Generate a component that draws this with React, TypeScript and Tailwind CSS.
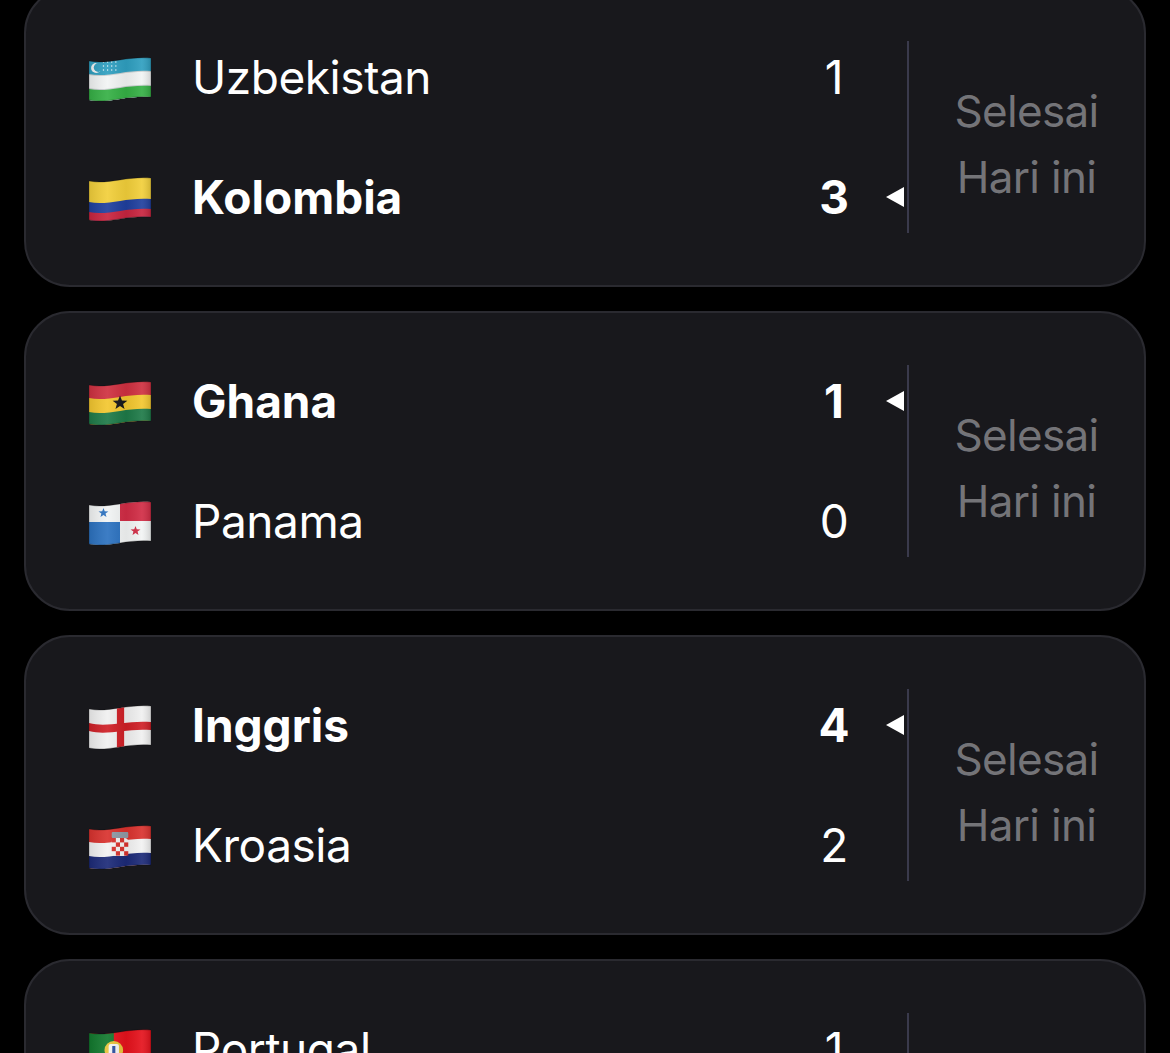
import { ReactNode, useId } from 'react';

// wavy edge shared by every flag, painted top to bottom and clipped to the outline
const wave = (y: number) => `M0 ${y + 3}C18 ${y + 7} 36 ${y - 2} 60 ${y}`;
const band = (y: number) => `${wave(y)}V54H0Z`;
const outline = `${wave(2)}V41C36 39 18 48 0 44Z`;

const star = (cx: number, cy: number, r: number) => {
  const pts: string[] = [];
  for (let i = 0; i < 10; i++) {
    const a = (Math.PI / 5) * i - Math.PI / 2;
    const d = i % 2 === 0 ? r : r * 0.42;
    pts.push(`${(cx + Math.cos(a) * d).toFixed(1)},${(cy + Math.sin(a) * d).toFixed(1)}`);
  }
  return pts.join(' ');
};

function Flag({ children }: { children: ReactNode }) {
  const id = useId();
  return (
    <svg width="62" height="50" viewBox="0 0 60 50" preserveAspectRatio="none" className="shrink-0">
      <defs>
        <clipPath id={`${id}c`}>
          <path d={outline} />
        </clipPath>
        <linearGradient id={`${id}g`} x1="0" x2="1" y1="0" y2="0">
          <stop offset="0" stopColor="#000" stopOpacity="0.1" />
          <stop offset="0.3" stopColor="#fff" stopOpacity="0.08" />
          <stop offset="0.6" stopColor="#000" stopOpacity="0.06" />
          <stop offset="0.85" stopColor="#fff" stopOpacity="0.08" />
          <stop offset="1" stopColor="#000" stopOpacity="0.14" />
        </linearGradient>
      </defs>
      <g transform="translate(0 4)">
        <g clipPath={`url(#${id}c)`}>
          {children}
          <rect x="0" y="0" width="60" height="50" fill={`url(#${id}g)`} />
        </g>
        <path d={outline} fill="none" stroke="#000" strokeOpacity="0.3" strokeWidth="0.8" />
      </g>
    </svg>
  );
}

const Uzbekistan = () => (
  <Flag>
    <path d={band(0)} fill="#2f9fc0" />
    <path d={band(15)} fill="#c9cfd0" />
    <path d={band(16)} fill="#f2f4f4" />
    <path d={band(29)} fill="#c9cfd0" />
    <path d={band(30)} fill="#35b045" />
    <circle cx="7" cy="12" r="5" fill="#f2f4f4" />
    <circle cx="9" cy="11.5" r="4.4" fill="#2f9fc0" />
    {[14, 18, 22, 26].map((x) =>
      [6, 10, 14].map((y) => <circle key={`${x}-${y}`} cx={x} cy={y} r="0.7" fill="#e8f4f8" />),
    )}
  </Flag>
);

const Kolombia = () => (
  <Flag>
    <path d={band(0)} fill="#f2cf3a" />
    <path d={band(23)} fill="#1f3f9e" />
    <path d={band(33)} fill="#c8243f" />
  </Flag>
);

const Ghana = () => (
  <Flag>
    <path d={band(0)} fill="#cf3040" />
    <path d={band(15)} fill="#f3c72f" />
    <path d={band(29)} fill="#1e7a48" />
    <polygon points={star(30, 23, 7.5)} fill="#16161a" />
  </Flag>
);

const Panama = () => (
  <Flag>
    <rect x="0" y="0" width="60" height="50" fill="#f2f4f4" />
    <rect x="30" y="0" width="30" height="21" fill="#d12c45" />
    <rect x="0" y="22" width="30" height="28" fill="#2c72c0" />
    <polygon points={star(14, 13, 5)} fill="#2c72c0" />
    <polygon points={star(45, 31, 5)} fill="#d12c45" />
  </Flag>
);

const Inggris = () => (
  <Flag>
    <rect x="0" y="0" width="60" height="50" fill="#f0f0f0" />
    <rect x="27" y="0" width="7" height="50" fill="#cf1f26" />
    <path d="M0 19C18 24 36 16 60 18V26C36 24 18 32 0 27Z" fill="#cf1f26" />
  </Flag>
);

const Kroasia = () => (
  <Flag>
    <path d={band(0)} fill="#d9322e" />
    <path d={band(15)} fill="#f2f2f2" />
    <path d={band(29)} fill="#1c2a78" />
    <rect x="22" y="8" width="16" height="6" rx="1" fill="#8f9aa6" />
    <rect x="22" y="14" width="16" height="18" rx="4" fill="#f4f4f4" />
    {[0, 1, 2, 3].map((r) =>
      [0, 1, 2, 3].map((c) =>
        (r + c) % 2 === 0 ? (
          <rect key={`${r}-${c}`} x={22 + c * 4} y={14 + r * 4.4} width="4" height="4.4" fill="#d9322e" />
        ) : null,
      ),
    )}
  </Flag>
);

const Portugal = () => (
  <Flag>
    <rect x="0" y="0" width="60" height="50" fill="#e5121c" />
    <rect x="0" y="0" width="24" height="50" fill="#127a2e" />
    <circle cx="24" cy="22" r="9" fill="#e8c33a" />
    <rect x="19" y="16" width="10" height="12" rx="2" fill="#f4f4f4" />
    <rect x="22.5" y="18" width="3" height="7" fill="#2c4fa0" />
  </Flag>
);

type Team = { name: string; score: number; flag: ReactNode; winner?: boolean };

function TeamRow({ team }: { team: Team }) {
  const weight = team.winner ? 'font-bold' : 'font-normal tracking-[-0.45px]';
  return (
    <div className="flex h-[72px] items-center">
      {team.flag}
      <span className={`ml-[41px] flex-1 text-[46px] leading-none ${weight}`}>{team.name}</span>
      <span className={`w-[60px] text-center text-[46px] leading-none ${weight}`}>{team.score}</span>
      <div className="flex w-[43px] justify-end pr-[3px]">
        {team.winner && (
          <svg width="18" height="20" viewBox="0 0 18 20">
            <polygon points="0,10 18,0 18,20" fill="#fff" />
          </svg>
        )}
      </div>
    </div>
  );
}

function MatchCard({ teams }: { teams: [Team, Team] }) {
  return (
    <div className="flex h-[300px] shrink-0 items-center rounded-[46px] border-2 border-[#2a2a30] bg-[#18181c] pl-[63px]">
      <div className="flex flex-1 flex-col gap-12">
        <TeamRow team={teams[0]} />
        <TeamRow team={teams[1]} />
      </div>
      <div className="h-[192px] w-[2px] bg-[#3a3a4c]" />
      <div className="flex w-[235px] flex-col items-center pt-[14px] text-[44px] leading-[66px] tracking-[-0.7px] text-[#747478]">
        <span>Selesai</span>
        <span>Hari ini</span>
      </div>
    </div>
  );
}

const matches: [Team, Team][] = [
  [
    { name: 'Uzbekistan', score: 1, flag: <Uzbekistan /> },
    { name: 'Kolombia', score: 3, flag: <Kolombia />, winner: true },
  ],
  [
    { name: 'Ghana', score: 1, flag: <Ghana />, winner: true },
    { name: 'Panama', score: 0, flag: <Panama /> },
  ],
  [
    { name: 'Inggris', score: 4, flag: <Inggris />, winner: true },
    { name: 'Kroasia', score: 2, flag: <Kroasia /> },
  ],
  [
    { name: 'Portugal', score: 1, flag: <Portugal /> },
    { name: 'Kolombia', score: 1, flag: <Kolombia /> },
  ],
];

export default function App() {
  return (
    <div className="h-[1053px] overflow-hidden bg-black font-['Inter',sans-serif] text-white">
      <div className="-mt-[13px] flex flex-col gap-6 px-6">
        {matches.map((teams, i) => (
          <MatchCard key={i} teams={teams} />
        ))}
      </div>
    </div>
  );
}
